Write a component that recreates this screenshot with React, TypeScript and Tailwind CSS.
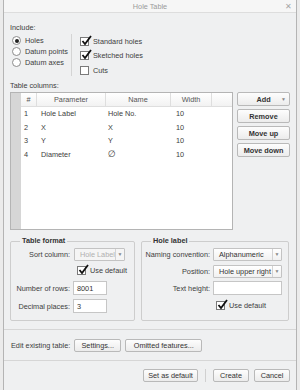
import React from 'react';

const rows = [
  { n: '1', param: 'Hole Label', name: 'Hole No.', width: '10' },
  { n: '2', param: 'X', name: 'X', width: '10' },
  { n: '3', param: 'Y', name: 'Y', width: '10' },
  { n: '4', param: 'Diameter', name: '\u2205', width: '10' },
];

const Radio = ({ checked, label }: { checked?: boolean; label: string }) => (
  <div className="flex items-center h-[11px]">
    <span className="ml-[2px] w-[9px] h-[9px] rounded-full border border-[#8c8c8c] bg-white flex items-center justify-center">
      {checked && <span className="w-[4px] h-[4px] rounded-full bg-[#222]" />}
    </span>
    <span className="ml-[4px]">{label}</span>
  </div>
);

const Check = ({ checked, label, className = '' }: { checked?: boolean; label: string; className?: string }) => (
  <div className={`flex items-center ${className}`}>
    <span className="relative w-[9px] h-[9px] border border-[#7a7a7a] bg-white shrink-0">
      {checked && (
        <svg className="absolute left-[0px] top-[-3px]" width="11" height="11" viewBox="0 0 11 11">
          <path d="M1.5 6 L4 9 L10 1" fill="none" stroke="#111" strokeWidth="1.8" />
        </svg>
      )}
    </span>
    <span className="ml-[4px]">{label}</span>
  </div>
);

const Btn = ({ children, className = '' }: { children: React.ReactNode; className?: string }) => (
  <div className={`h-[13px] flex items-center justify-center rounded-[2px] border border-[#b9b9b9] bg-gradient-to-b from-[#fdfdfd] to-[#ececec] font-bold text-[#333] ${className}`}>
    {children}
  </div>
);

const Select = ({ value, disabled, className = '' }: { value: string; disabled?: boolean; className?: string }) => (
  <div className={`h-[13px] flex border border-[#c3c3c3] rounded-[1px] ${disabled ? 'bg-[#f5f5f5] text-[#b0b0b0]' : 'bg-gradient-to-b from-white to-[#f1f1f1] text-[#333]'} ${className}`}>
    <span className="flex-1 flex items-center pl-[5px] overflow-hidden">{value}</span>
    <span className="w-[9px] border-l border-[#d3d3d3] flex items-center justify-center text-[5px] text-[#888]">▼</span>
  </div>
);

const Input = ({ value = '', className = '' }: { value?: string; className?: string }) => (
  <div className={`h-[14px] border border-[#c6c6c6] bg-white flex items-center pl-[3px] text-[#333] ${className}`}>{value}</div>
);

export default function App() {
  return (
    <div className="w-[300px] h-[390px] bg-[#ebebeb] overflow-hidden whitespace-nowrap font-['Liberation_Sans',Arial,sans-serif] text-[7.3px] leading-[11px] text-[#3d3d3d]">
      <div className="ml-[3px] w-[294px] h-[390px] border-x border-[#b4b4b4] bg-[#eff0f1] flex flex-col">
        {/* title bar */}
        <div className="h-[13px] shrink-0 bg-[#f6f6f6] border-b border-[#dddddd] relative flex items-center justify-center">
          <span className="text-[#9a9a9a]">Hole Table</span>
          <span className="absolute right-[4px] top-[1px] text-[#a5a5a5] text-[8px]">✕</span>
        </div>

        <div className="px-[6px] flex flex-col">
          <div className="mt-[9px] h-[11px]">Include:</div>
          <div className="flex mt-[1px]">
            <div className="w-[61px] pt-[1px]">
              <Radio checked label="Holes" />
              <Radio label="Datum points" />
              <Radio label="Datum axes" />
            </div>
            <div className="w-px h-[42px] bg-[#d4d4d4]" />
            <div className="ml-[8px]">
              <Check checked label="Standard holes" className="h-[14px]" />
              <Check checked label="Sketched holes" className="h-[14px]" />
              <Check label="Cuts" className="h-[14px] mt-[1px]" />
            </div>
          </div>

          <div className="mt-[3px] h-[11px]">Table columns:</div>

          <div className="flex mt-[1px] gap-[4px]">
            {/* table */}
            <div className="w-[223px] h-[138px] border border-[#b4b4b4] bg-white flex">
              <div className="w-[10px] bg-[#d6d6d6] shrink-0" />
              <div className="flex-1 flex flex-col">
                <div className="h-[14px] flex border-b border-[#dedede] bg-gradient-to-b from-white to-[#f2f2f2] text-[#555]">
                  <div className="w-[16px] border-r border-[#dedede] flex items-center justify-center">#</div>
                  <div className="w-[69px] border-r border-[#dedede] flex items-center justify-center">Parameter</div>
                  <div className="w-[65px] border-r border-[#dedede] flex items-center justify-center">Name</div>
                  <div className="w-[41px] border-r border-[#dedede] flex items-center justify-center">Width</div>
                  <div className="flex-1" />
                </div>
                {rows.map((r) => (
                  <div key={r.n} className="h-[13.6px] flex items-center">
                    <div className="w-[16px] pl-[3px]">{r.n}</div>
                    <div className="w-[69px] pl-[4px]">{r.param}</div>
                    <div className={`w-[65px] pl-[2px] ${r.n === '4' ? "font-['DejaVu_Sans'] text-[9px] italic" : ''}`}>{r.name}</div>
                    <div className="w-[41px] pl-[5px]">{r.width}</div>
                  </div>
                ))}
              </div>
            </div>

            {/* side buttons */}
            <div className="w-[53px] flex flex-col gap-[3px]">
              <Btn className="h-[14px] relative">
                Add
                <span className="absolute right-[3px] text-[5px] text-[#888] font-normal">▼</span>
              </Btn>
              <Btn className="h-[14px]">Remove</Btn>
              <Btn className="h-[14px]">Move up</Btn>
              <Btn className="h-[14px]">Move down</Btn>
            </div>
          </div>

          {/* groups */}
          <div className="flex gap-[6px] mt-[6px]">
            <fieldset className="w-[125px] border border-[#cdcdcd] rounded-[2px] pb-[7px]">
              <legend className="ml-[9px] px-[2px] font-bold text-[#333] leading-[10px]">Table format</legend>
              <div className="flex items-center mt-[2px]">
                <span className="w-[59px] text-right">Sort column:</span>
                <Select disabled value="Hole Label" className="ml-[4px] w-[51px]" />
              </div>
              <Check checked label="Use default" className="ml-[66px] mt-[5px] h-[9px]" />
              <div className="flex items-center mt-[6px]">
                <span className="w-[59px] text-right">Number of rows:</span>
                <Input value="8001" className="ml-[3px] w-[34px]" />
              </div>
              <div className="flex items-center mt-[4px]">
                <span className="w-[59px] text-right">Decimal places:</span>
                <Input value="3" className="ml-[3px] w-[34px] h-[13px]" />
              </div>
            </fieldset>

            <fieldset className="w-[148px] border border-[#cdcdcd] rounded-[2px] pb-[9px]">
              <legend className="ml-[9px] px-[2px] font-bold text-[#333] leading-[10px]">Hole label</legend>
              <div className="flex items-center mt-[2px]">
                <span className="w-[68px] text-right">Naming convention:</span>
                <Select value="Alphanumeric" className="ml-[3px] w-[69px]" />
              </div>
              <div className="flex items-center mt-[4px]">
                <span className="w-[68px] text-right">Position:</span>
                <Select value="Hole upper right" className="ml-[3px] w-[69px]" />
              </div>
              <div className="flex items-center mt-[3px]">
                <span className="w-[68px] text-right">Text height:</span>
                <Input className="ml-[3px] w-[69px]" />
              </div>
              <Check checked label="Use default" className="ml-[74px] mt-[6px] h-[9px]" />
            </fieldset>
          </div>
        </div>

        <div className="mt-[8px] h-px bg-[#d6d6d6]" />
        <div className="px-[6px] flex items-center h-[30px]">
          <span className="ml-[1px]">Edit existing table:</span>
          <Btn className="ml-[4px] w-[47px] font-normal">Settings...</Btn>
          <Btn className="ml-[4px] w-[77px] font-normal">Omitted features...</Btn>
        </div>
        <div className="h-px bg-[#d6d6d6]" />
        <div className="px-[6px] flex items-center justify-end h-[28px] gap-[5px]">
          <Btn className="w-[55px] font-normal">Set as default</Btn>
          <div className="w-px h-[13px] bg-[#d0d0d0] mx-[2px]" />
          <Btn className="w-[36px] font-normal border-[#78aee0] from-[#d9ecfa] to-[#b9dcf5]">Create</Btn>
          <Btn className="w-[36px] font-normal">Cancel</Btn>
        </div>
      </div>
    </div>
  );
}
